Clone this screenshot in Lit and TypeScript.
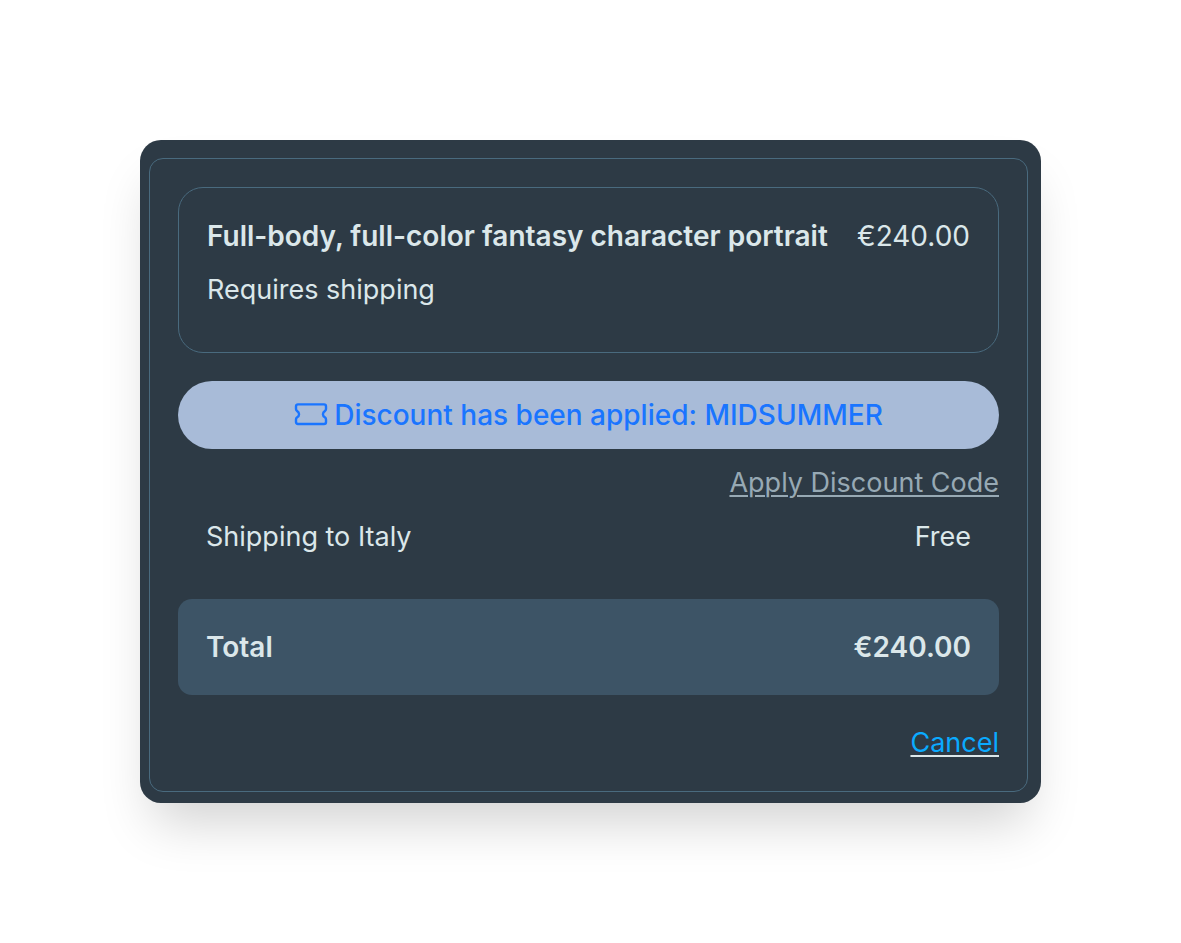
import { LitElement, html, css } from "lit";
import { customElement, property } from "lit/decorators.js";

@customElement("ticket-icon")
class TicketIcon extends LitElement {
  static styles = css`
    :host {
      display: block;
      flex: none;
    }
    .glyph {
      display: block;
      width: 34px;
      height: 24px;
      fill: none;
      stroke: currentColor;
      stroke-width: 2.4;
      stroke-linejoin: round;
    }
  `;

  render() {
    return html`
      <svg class="glyph" viewBox="0 0 34 24" aria-hidden="true">
        <path
          d="M4 1.4H30Q32 1.4 32 3.4V6Q32 7.2 31.1 7.9C28.2 9.6 28.2 12.8 31.1 14.5Q32 15.2 32 16.4V19Q32 21 30 21H4Q2 21 2 19V16.4Q2 15.2 2.9 14.5C5.8 12.8 5.8 9.6 2.9 7.9Q2 7.2 2 6V3.4Q2 1.4 4 1.4Z"
        />
      </svg>
    `;
  }
}

@customElement("app-root")
class AppRoot extends LitElement {
  @property() item = "Full-body, full-color fantasy character portrait";
  @property() price = "€240.00";
  @property() code = "MIDSUMMER";
  @property() country = "Italy";

  static styles = css`
    :host {
      display: block;
      box-sizing: border-box;
      padding: 140px;
      background: #fff;
      color: #dbe7ea;
      font-family: Inter, sans-serif;
      font-size: 27px;
      line-height: 42px;
    }
    .card {
      padding: 18px 13px 11px 9px;
      border-radius: 21px;
      background: #2d3a45;
      box-shadow: 0 32px 52px -13px rgba(0, 0, 0, 0.18);
    }
    .panel {
      padding: 28px 28px 27px;
      border: 1px solid #496a7e;
      border-radius: 14px;
      display: flex;
      flex-direction: column;
    }
    .item {
      margin: 0;
      padding: 27px 28px 41px;
      border: 1px solid #496a7e;
      border-radius: 25px;
    }
    .row {
      display: flex;
      justify-content: space-between;
      white-space: nowrap;
    }
    .heading,
    .notice,
    .total {
      font-size: 28px;
    }
    .name {
      margin: 0;
      font-size: inherit;
      font-weight: 600;
    }
    .note {
      margin: 12px 0 0;
    }
    .notice {
      display: flex;
      align-items: center;
      justify-content: center;
      gap: 6px;
      margin-top: 28px;
      padding: 13px;
      border-radius: 34px;
      background: #a8bbd8;
      color: #1a75ff;
      font-weight: 500;
      white-space: nowrap;
    }
    .link {
      align-self: flex-end;
      text-decoration: underline;
      text-decoration-thickness: 2px;
      text-underline-offset: 3px;
    }
    .apply {
      margin-top: 13px;
      color: #97a9b4;
    }
    .shipping {
      margin-top: 12px;
      padding: 0 28px;
    }
    .total {
      margin-top: 41px;
      padding: 27px 28px;
      border-radius: 14px;
      background: #3d5466;
      font-weight: 600;
    }
    .cancel {
      margin-top: 27px;
      color: #0aaaff;
      text-decoration-color: #dbe7ea;
    }
  `;

  render() {
    return html`
      <main class="card">
        <section class="panel">
          <article class="item">
            <div class="row heading">
              <h2 class="name">${this.item}</h2>
              <span>${this.price}</span>
            </div>
            <p class="note">Requires shipping</p>
          </article>
          <div class="notice" role="status">
            <ticket-icon></ticket-icon>
            <span>Discount has been applied: ${this.code}</span>
          </div>
          <a class="link apply" href="#discount">Apply Discount Code</a>
          <div class="row shipping">
            <span>Shipping to ${this.country}</span>
            <span>Free</span>
          </div>
          <div class="row total">
            <span>Total</span>
            <span>${this.price}</span>
          </div>
          <a class="link cancel" href="#cancel">Cancel</a>
        </section>
      </main>
    `;
  }
}
